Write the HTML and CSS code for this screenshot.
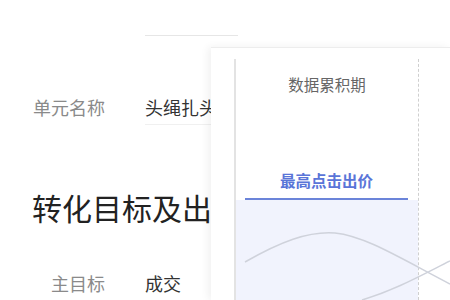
FILE: index.html
```html
<!DOCTYPE html>
<html lang="zh-CN">
<head>
    <meta charset="UTF-8">
    <meta name="viewport" content="width=device-width, initial-scale=1.0">
    <title>出价设置</title>
    <link rel="stylesheet" href="styles.css">
</head>
<body>

<div class="page">
    <div class="field field-top">
        <span class="label"></span>
        <span class="value"></span>
    </div>

    <div class="field field-name">
        <span class="label">单元名称</span>
        <span class="value value-input">头绳扎头发饰</span>
    </div>

    <h2 class="section-title">转化目标及出价</h2>

    <div class="field field-goal">
        <span class="label">主目标</span>
        <span class="value">成交</span>
    </div>
</div>

<!-- Bid tip popover -->
<div class="bid-panel">
    <div class="stage">
        <div class="stage-title">数据累积期</div>
        <div class="stage-tab">最高点击出价</div>
        <div class="stage-fill"></div>
    </div>

    <svg class="curves" viewBox="211 47 239 253" width="239" height="253">
        <path d="M245 262 C 280 242, 308 231, 335 233 C 365 236, 400 258, 450 284" />
        <path d="M362 300 C 395 290, 420 276, 450 261" />
    </svg>
</div>

</body>
</html>
```

FILE: styles.css
```css
/* Global Styles */
body {
    font-family: "Noto Sans CJK SC", "Noto Sans", sans-serif;
    background-color: #ffffff;
    margin: 0;
    width: 450px;
    height: 300px;
    overflow: hidden;
    position: relative;
}

/* Form rows */
.field {
    display: flex;
    align-items: flex-start;
    font-size: 18px;
    line-height: 24px;
}

.label {
    width: 105px;
    text-align: right;
    color: #8a8a8a;
    flex-shrink: 0;
}

.value {
    margin-left: 40px;
    color: #333;
    white-space: nowrap;
}

.field-top .value {
    width: 93px;
    height: 35px;
    border-bottom: 1px solid #e6e6e6;
}

.field-name {
    margin-top: 59px;
}

.value-input {
    width: 120px;
    padding-bottom: 5px;
    border-bottom: 1px solid #f0f0f0;
}

.section-title {
    margin: 62px 0 0 32px;
    font-size: 30px;
    line-height: 40px;
    font-weight: 400;
    color: #222;
}

.field-goal {
    margin-top: 44px;
}

/* Popover */
.bid-panel {
    position: absolute;
    left: 211px;
    top: 47px;
    right: 0;
    bottom: 0;
    background: #fff;
    border-top: 1px solid #ededed;
    box-shadow: -3px 0 8px rgba(0, 0, 0, 0.06);
    padding: 11px 0 0 23px;
    display: flex;
    flex-direction: column;
}

.stage {
    flex: 1;
    width: 182px;
    border-left: 2px solid #e3e3e3;
    border-right: 1px dashed #cfcfcf;
    display: flex;
    flex-direction: column;
}

.stage-title {
    margin-top: 14px;
    text-align: center;
    font-size: 15.5px;
    line-height: 22px;
    color: #666;
}

.stage-tab {
    margin: 74px 10px 0 9px;
    padding-bottom: 7px;
    border-bottom: 2px solid #6b84d9;
    text-align: center;
    font-size: 15.5px;
    line-height: 22px;
    font-weight: 700;
    color: #5a75d8;
}

.stage-fill {
    flex: 1;
    background-color: #f1f3fd;
}

.curves {
    position: absolute;
    left: 0;
    top: -1px;
    fill: none;
    stroke: #cfd2db;
    stroke-width: 1.5;
}
```
